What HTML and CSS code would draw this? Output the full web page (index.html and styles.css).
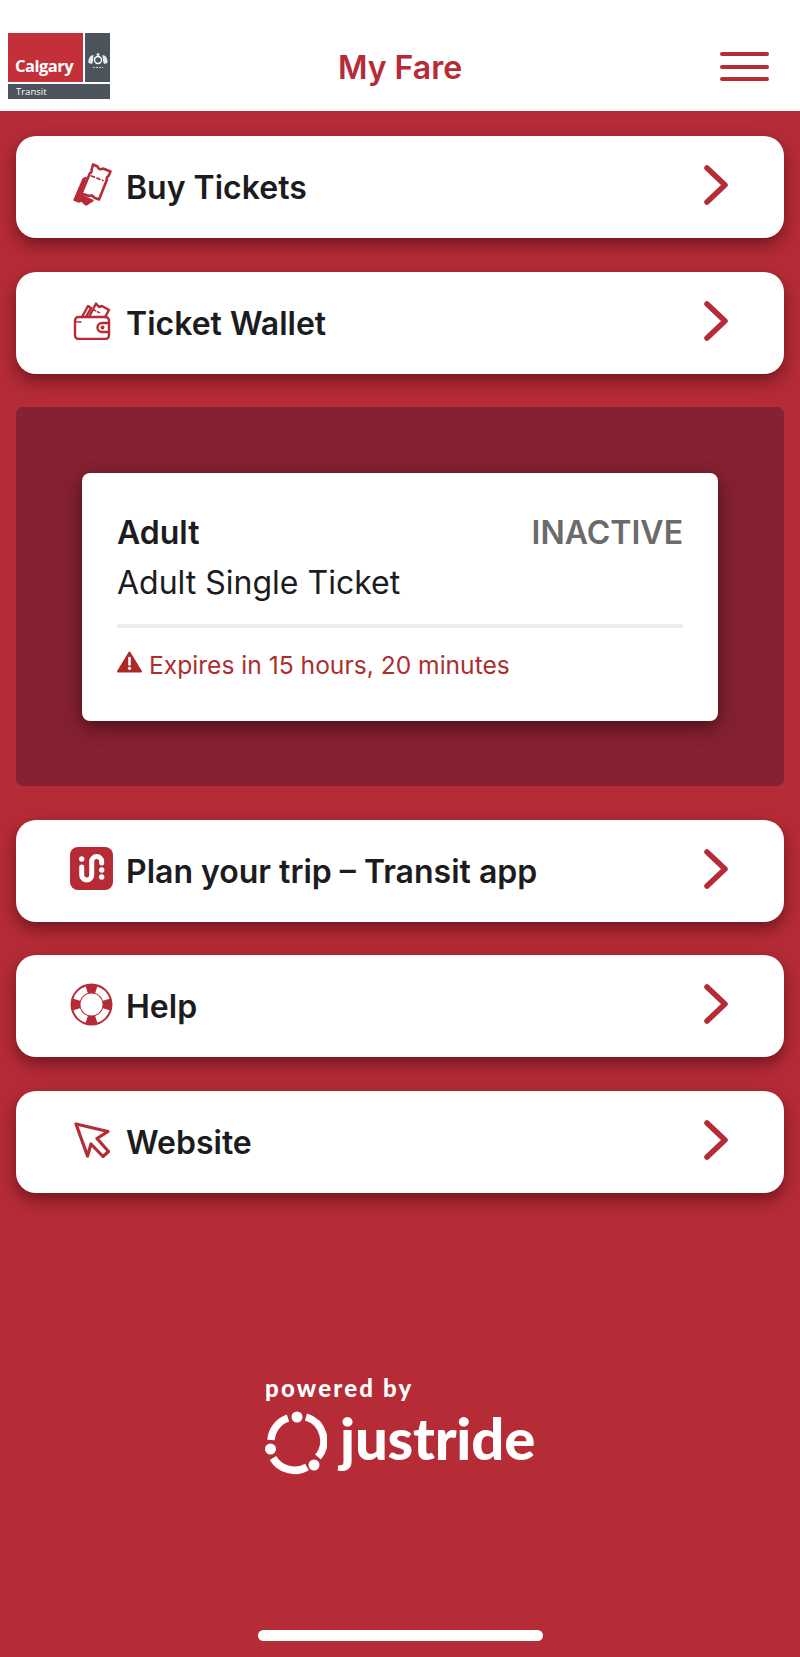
FILE: index.html
```html
<!DOCTYPE html>
<html lang="en">
<head>
    <meta charset="UTF-8">
    <meta name="viewport" content="width=device-width, initial-scale=1.0">
    <title>My Fare</title>
    <link rel="stylesheet" href="styles.css">
</head>
<body>
    <div class="header">
        <div class="logo">
            <div class="logo-top">
                <div class="logo-red">Calgary</div>
                <div class="logo-crest">
                    <svg width="22" height="18" viewBox="0 0 22 18">
                        <circle cx="11" cy="8" r="3.500" fill="none" stroke="#fff" stroke-width="1.400"/>
                        <circle cx="11" cy="2.500" r="1.500" fill="#dfe2e5"/>
                        <path d="M6.500 3 C3 3 1 7 1.500 11 L5 12 L6 9 Z M15.500 3 C19 3 21 7 20.500 11 L17 12 L16 9 Z" fill="#e6e8ea"/>
                        <path d="M6 15.500 H16" stroke="#cfd3d6" stroke-width="1.200" stroke-dasharray="2 1"/>
                    </svg>
                </div>
            </div>
            <div class="logo-bottom">Transit</div>
        </div>
        <div class="title">My Fare</div>
        <div class="burger"><span></span><span></span><span></span></div>
    </div>

    <div class="main">
        <div class="row">
            <div class="row-icon">
                <svg width="40" height="44" viewBox="0 0 40 44" fill="none" stroke="#b52b36" stroke-linejoin="round" stroke-linecap="round">
                    <path d="M21 1.500 L25.500 3.500 C26 6 29 7 31 5.500 L38.500 8.500 L36.500 13 C35 13.500 34.500 15.500 35 16.500 L27 36.500 L22 34.500 C21 32.500 18.500 32 17 33 L9.500 30.500 L18 10 C19 10 20 8.500 19.500 7 Z" stroke-width="2.600"/>
                    <path d="M19.500 13 L31 17.500" stroke-width="1.800" stroke-dasharray="3 3"/>
                    <path d="M11 16 L2 37 L7 39 C8.500 37.500 10.500 38 11.500 40 L14 42 L21 37.500 L7.500 31.500 L14 14.500 Z" fill="#b52b36" stroke-width="1.500"/>
                </svg>
            </div>
            <div class="row-label">Buy Tickets</div>
            <svg class="chevron" width="24" height="40" viewBox="0 0 24 40"><path d="M3 3 L21 20 L3 37"/></svg>
        </div>

        <div class="row">
            <div class="row-icon">
                <svg width="38" height="38" viewBox="0 0 38 38" fill="none" stroke="#b52b36" stroke-linejoin="round" stroke-linecap="round">
                    <path d="M9 15 L15 4 L18 6 L13 15" stroke-width="2.400"/>
                    <path d="M16 15 L23 1.500 L26 5 L29 4 L36 8 L32 15" stroke-width="2.400"/>
                    <path d="M21 8 L27 11" stroke-width="1.500" stroke-dasharray="2 2"/>
                    <rect x="2" y="15" width="34" height="22" rx="3.500" stroke-width="2.400"/>
                    <path d="M2 18 C2 20 4 20 6 20 H8" stroke-width="1.500"/>
                    <path d="M36 21 H29 A4.500 4.500 0 0 0 29 30 H36" stroke-width="2.400"/>
                    <circle cx="29.500" cy="25.500" r="2" fill="#b52b36" stroke="none"/>
                </svg>
            </div>
            <div class="row-label">Ticket Wallet</div>
            <svg class="chevron" width="24" height="40" viewBox="0 0 24 40"><path d="M3 3 L21 20 L3 37"/></svg>
        </div>

        <div class="panel">
            <div class="ticket">
                <div class="ticket-head">
                    <div class="ticket-type">Adult</div>
                    <div class="ticket-status">INACTIVE</div>
                </div>
                <div class="ticket-name">Adult Single Ticket</div>
                <div class="ticket-line"></div>
                <div class="ticket-warn">
                    <svg width="25" height="22" viewBox="0 0 25 22">
                        <path d="M12.500 1.500 L24 20.500 H1 Z" fill="#ab2a26" stroke="#ab2a26" stroke-width="2" stroke-linejoin="round"/>
                        <path d="M12.500 7 V13.500" stroke="#fff" stroke-width="2.600" stroke-linecap="round"/>
                        <circle cx="12.500" cy="17.300" r="1.600" fill="#fff"/>
                    </svg>
                    <span>Expires in 15 hours, 20 minutes</span>
                </div>
            </div>
        </div>

        <div class="row">
            <div class="row-icon">
                <svg width="43" height="43" viewBox="0 0 43 43">
                    <rect width="43" height="43" rx="8" fill="#b52b36"/>
                    <path d="M11.700 20 V28 A5 5 0 0 0 21.700 28 V14.500 A5 5 0 0 1 31.700 14.500 V16" fill="none" stroke="#fff" stroke-width="5" stroke-linecap="round"/>
                    <circle cx="11.700" cy="12" r="2.700" fill="#fff"/>
                    <circle cx="31.700" cy="23" r="2.700" fill="#fff"/>
                    <circle cx="31.700" cy="30" r="2.700" fill="#fff"/>
                </svg>
            </div>
            <div class="row-label">Plan your trip – Transit app</div>
            <svg class="chevron" width="24" height="40" viewBox="0 0 24 40"><path d="M3 3 L21 20 L3 37"/></svg>
        </div>

        <div class="row">
            <div class="row-icon">
                <svg width="43" height="43" viewBox="0 0 43 43" fill="none">
                    <circle cx="21.500" cy="21.500" r="21" fill="#b52b36"/>
                    <circle cx="21.500" cy="21.500" r="15.500" stroke="#fff" stroke-width="7" pathLength="100" stroke-dasharray="15 10" stroke-dashoffset="20"/>
                    <circle cx="21.500" cy="21.500" r="11" fill="#fff"/>
                </svg>
            </div>
            <div class="row-label">Help</div>
            <svg class="chevron" width="24" height="40" viewBox="0 0 24 40"><path d="M3 3 L21 20 L3 37"/></svg>
        </div>

        <div class="row">
            <div class="row-icon">
                <svg width="36" height="36" viewBox="0 0 36 36">
                    <path d="M2 2 L34 9.500 L23 16.500 L34.500 29.500 L29 34.500 L17 22 L13.500 34 Z" fill="none" stroke="#b52b36" stroke-width="3.200" stroke-linejoin="round"/>
                </svg>
            </div>
            <div class="row-label">Website</div>
            <svg class="chevron" width="24" height="40" viewBox="0 0 24 40"><path d="M3 3 L21 20 L3 37"/></svg>
        </div>
    </div>

    <div class="footer">
        <div class="powered">powered by</div>
        <div class="brand">
            <svg width="62" height="66" viewBox="0 0 62 66" fill="none">
                <path d="M6 29 A25 25 0 0 1 23 7" stroke="#fff" stroke-width="7.500"/>
                <path d="M41 6 A25 25 0 0 1 53 46" stroke="#fff" stroke-width="7.500"/>
                <path d="M42 56 A25 25 0 0 1 8 47" stroke="#fff" stroke-width="7.500"/>
                <circle cx="32" cy="6" r="5.500" fill="#fff"/>
                <circle cx="5.500" cy="38" r="5.500" fill="#fff"/>
                <circle cx="49" cy="54" r="5.500" fill="#fff"/>
            </svg>
            <span class="brand-name">justride</span>
        </div>
    </div>

    <div class="home-bar"></div>
</body>
</html>
```

FILE: styles.css
```css
body{
    margin:0;
    width:800px;
    height:1657px;
    background:#b52b36;
    font-family:"Inter","Liberation Sans",sans-serif;
    color:#1c1c1e;
    display:flex;
    flex-direction:column;
    overflow:hidden;
}

/* header */
.header{
    height:111px;
    flex:none;
    box-sizing:border-box;
    padding:33px 31px 0 8px;
    background:#fff;
    position:relative;
    display:flex;
    justify-content:space-between;
}
.logo{
    width:102px;
    height:66px;
    font-family:"Open Sans","Liberation Sans",sans-serif;
    color:#fff;
}
.logo-top{
    display:flex;
    height:49px;
    gap:2px;
}
.logo-red{
    width:75px;
    box-sizing:border-box;
    padding:21px 0 0 7px;
    background:#c4303a;
    font-size:16.500px;
    font-weight:700;
    line-height:24px;
    letter-spacing:-0.500px;
}
.logo-crest{
    flex:1;
    background:#4b545c;
    display:flex;
    align-items:center;
    justify-content:center;
    padding-top:6px;
}
.logo-bottom{
    height:15px;
    margin-top:2px;
    padding-left:8px;
    background:#4b545c;
    font-size:9.500px;
    line-height:15px;
}
.title{
    position:absolute;
    left:0;
    right:0;
    top:46px;
    text-align:center;
    font-size:32px;
    font-weight:600;
    line-height:44px;
    color:#b52b36;
}
.burger{
    width:49px;
    margin-top:19px;
    display:flex;
    flex-direction:column;
    gap:8.500px;
}
.burger span{
    height:4px;
    border-radius:2px;
    background:#b52b36;
}

/* list */
.main{
    padding:25px 16px 0;
    display:flex;
    flex-direction:column;
    gap:33.500px;
}
.row{
    height:102px;
    box-sizing:border-box;
    padding:0 56px 0 52px;
    display:flex;
    align-items:center;
    background:#fff;
    border-radius:20px;
    box-shadow:0 7px 16px rgba(50,0,10,.5);
}
.row-icon{
    width:47px;
    margin:-4px 12px 0 0;
    height:46px;
    flex:none;
    display:flex;
    align-items:center;
    justify-content:center;
}
.row-label{
    flex:1;
    margin:2px 0 0 -1px;
    font-size:32px;
    font-weight:600;
    line-height:40px;
}
.chevron{
    fill:none;
    stroke:#b52b36;
    stroke-width:5.500;
    stroke-linecap:round;
    stroke-linejoin:round;
    margin-top:-4px;
}

/* ticket panel */
.panel{
    height:379px;
    box-sizing:border-box;
    padding:66px 66px 0;
    background:#852130;
    border-radius:7px;
}
.ticket{
    height:248px;
    box-sizing:border-box;
    padding:40px 35px 0;
    background:#fff;
    border-radius:8px;
    box-shadow:0 6px 18px rgba(30,0,5,.55);
}
.ticket-head{
    display:flex;
    justify-content:space-between;
    line-height:40px;
    font-size:32px;
    font-weight:600;
}
.ticket-status{
    color:#6b6b6b;
}
.ticket-name{
    margin-top:10px;
    font-size:32px;
    line-height:40px;
}
.ticket-line{
    height:4px;
    margin-top:21px;
    background:#eee;
}
.ticket-warn{
    margin-top:20px;
    display:flex;
    align-items:center;
    gap:7px;
    font-size:24.600px;
    line-height:34px;
    color:#ab2f2f;
}
.ticket-warn svg{
    margin-top:-6px;
}

/* footer */
.footer{
    margin-top:auto;
    padding-left:265px;
    color:#fff;
}
.powered{
    font-size:24px;
    font-weight:900;
    line-height:28px;
    letter-spacing:2.200px;
    font-family:"Lato","Liberation Sans",sans-serif;
}
.brand{
    display:flex;
    align-items:flex-start;
    gap:13px;
    margin-top:9px;
}
.brand-name{
    font-family:"Lato","Liberation Sans",sans-serif;
    font-size:58px;
    font-weight:900;
    line-height:58px;
    letter-spacing:-0.200px;
    margin-top:-2px;
}
.home-bar{
    width:285px;
    height:11px;
    margin:153px auto 16px;
    border-radius:6px;
    background:#fff;
}
```
